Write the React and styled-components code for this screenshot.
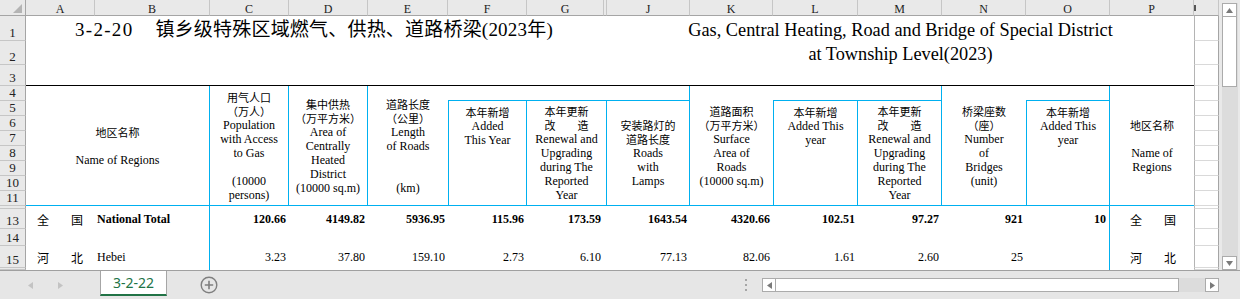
import React from "react";
import styled, { createGlobalStyle } from "styled-components";

const CYAN = "#00b0f0";
const SERIF = `"Liberation Serif", "Noto Sans CJK SC", serif`;
const CJK = `"Noto Sans CJK SC", sans-serif`;

const GlobalStyle = createGlobalStyle`
  html, body { margin: 0; padding: 0; overflow: hidden; background: #fff; }
  * { box-sizing: border-box; }
`;

const Window = styled.div`
  width: 1240px;
  height: 299px;
  display: flex;
  flex-direction: column;
  background: #e6e6e6;
  font-family: ${SERIF};
  color: #000;
`;

const Main = styled.div`
  display: flex;
  height: 270px;
`;

const Sheet = styled.div`
  display: grid;
  grid-template-columns: 26px 69px 115px 79px 79px 80px 79px 77px 3px 83px 83px 85px 84px 84px 84px 84px 25px;
  grid-template-rows: 16px 25px 24px 21px repeat(8, 15px) 3px 20px 17px 22px 2px;
  width: 1219px;
  height: 270px;
  background: #fff;
  overflow: hidden;
`;

const line = (c) => (c ? `1px solid ${c}` : "none");

const Corner = styled.div`
  grid-column: 1;
  grid-row: 1;
  background: #e9e9e9;
  border-right: 1px solid #a5a5a5;
  border-bottom: 1px solid #a5a5a5;
  display: flex;
  align-items: flex-end;
  justify-content: flex-end;
  padding: 0 3px 2px 0;
`;

const ColHead = styled.div`
  grid-column: ${(p) => p.$c};
  grid-row: 1;
  background: #e9e9e9;
  border-right: 1px solid #c6c6c6;
  border-bottom: 1px solid #a5a5a5;
  display: flex;
  align-items: center;
  justify-content: ${(p) => (p.$tick ? "flex-start" : "center")};
  padding-top: 2px;
  font-size: 12px;
  line-height: 14px;
  color: #222;
  overflow: hidden;
`;

const Tick = styled.span`
  width: 2px;
  height: 6px;
  margin-top: -2px;
  background: #555;
`;

const RowHead = styled.div`
  grid-column: 1;
  grid-row: ${(p) => p.$r};
  background: #e9e9e9;
  border-right: 1px solid #a5a5a5;
  border-bottom: 1px solid #c6c6c6;
  display: flex;
  align-items: flex-end;
  justify-content: center;
  font-size: 13px;
  line-height: 14px;
  color: #222;
  overflow: hidden;
`;

const TitleCn = styled.div`
  grid-column: 2 / span 8;
  grid-row: 2 / span 3;
  border-bottom: 1px solid #000;
  padding: 2px 0 0 49px;
  font-size: 19px;
  line-height: 24px;
  white-space: nowrap;
`;

const TitleNo = styled.span`
  letter-spacing: 1.3px;
`;

const TitleText = styled.span`
  margin-left: 22px;
  letter-spacing: 0.2px;
`;

const TitleEn = styled.div`
  grid-column: 10 / span 7;
  grid-row: 2 / span 3;
  border-bottom: 1px solid #000;
  padding-top: 2px;
  font-size: 18.3px;
  line-height: 24px;
  text-align: center;
  white-space: nowrap;
`;

const HeadCell = styled.div`
  grid-column: ${(p) => p.$c} / span ${(p) => p.$cs || 1};
  grid-row: ${(p) => p.$r} / span ${(p) => p.$rs};
  border-left: ${(p) => line(p.$left && CYAN)};
  border-right: ${(p) => line(p.$right && CYAN)};
  border-bottom: 1px solid ${CYAN};
  display: flex;
  flex-direction: column;
  align-items: center;
  justify-content: ${(p) => (p.$top ? "flex-start" : "center")};
  padding-top: ${(p) => (p.$top ? "4px" : "0")};
  text-align: center;
  overflow: hidden;
`;

const Line = styled.div`
  height: 14px;
  line-height: 14px;
  font-size: 12px;
  white-space: nowrap;
`;

const Cn = styled.span`
  font-family: ${CJK};
  font-size: 11px;
`;

const NameCn = styled.div`
  grid-column: ${(p) => p.$c};
  grid-row: ${(p) => p.$r};
  display: flex;
  align-items: center;
  justify-content: space-between;
  padding: ${(p) => p.$pad};
  font-family: ${CJK};
  font-size: 12px;
`;

const NameEn = styled.div`
  grid-column: 3;
  grid-row: ${(p) => p.$r};
  border-right: 1px solid ${CYAN};
  display: flex;
  align-items: center;
  padding-left: 2px;
  font-size: 12px;
  font-weight: ${(p) => (p.$bold ? 700 : 400)};
  white-space: nowrap;
`;

const Value = styled.div`
  grid-column: ${(p) => p.$c};
  grid-row: ${(p) => p.$r};
  border-right: ${(p) => line(p.$edge && CYAN)};
  display: flex;
  align-items: center;
  justify-content: flex-end;
  padding: 1px 3px 0 0;
  font-size: 12px;
  font-weight: ${(p) => (p.$bold ? 700 : 400)};
`;

const Edge = styled.div`
  grid-column: ${(p) => p.$c};
  grid-row: ${(p) => p.$r};
  border-right: 1px solid ${CYAN};
`;

const GapCell = styled.div`
  grid-column: 17;
  grid-row: ${(p) => p.$r};
  border-left: 1px solid #b4b4b4;
  border-right: 1px solid #a5a5a5;
  border-bottom: 1px solid #d9d9d9;
`;

const VScroll = styled.div`
  width: 21px;
  height: 270px;
  background: #e9e9e9;
  padding: 3px 2px 0 3px;
`;

const VTrack = styled.div`
  height: 100%;
  background: #dcdcdc;
  display: flex;
  flex-direction: column;
`;

const ScrollBtn = styled.div`
  width: ${(p) => p.$w}px;
  height: ${(p) => p.$h}px;
  flex: none;
  background: #fff;
  border: 1px solid #ababab;
  display: flex;
  align-items: center;
  justify-content: center;
`;

const VThumb = styled.div`
  width: 15px;
  height: 70px;
  background: #fff;
  border: 1px solid #ababab;
  border-top: none;
`;

const Bar = styled.div`
  height: 29px;
  border-top: 1px solid #a0a0a0;
  background: #e6e6e6;
  display: flex;
  align-items: flex-start;
`;

const Nav = styled.div`
  width: 100px;
  height: 28px;
  display: flex;
  align-items: center;
  padding-left: 27px;
  gap: 23px;
`;

const Tab = styled.div`
  width: 67px;
  height: 25px;
  background: #fff;
  border: 1px solid #a6a6a6;
  border-top: none;
  border-bottom: 2px solid #217346;
  display: flex;
  align-items: center;
  justify-content: center;
  font-family: "Noto Sans", sans-serif;
  font-size: 14px;
  color: #217346;
`;

const AddSheet = styled.svg`
  margin: 5px 0 0 33px;
`;

const Spacer = styled.div`
  flex: 1;
`;

const Dots = styled.svg`
  margin-top: 8px;
`;

const HScroll = styled.div`
  width: 457px;
  height: 14px;
  margin: 7px 21px 0 14px;
  display: flex;
  background: #dcdcdc;
`;

const HThumb = styled.div`
  width: 403px;
  height: 14px;
  background: #fff;
  border: 1px solid #ababab;
  border-left: none;
`;

const HGap = styled.div`
  flex: 1;
`;

const Arrow = ({ dir, color = "#7a7a7a", size = 7 }) => {
  const pts = {
    up: "0,6 3.5,1 7,6",
    down: "0,1 3.5,6 7,1",
    left: "6,0 1,3.5 6,7",
    right: "1,0 6,3.5 1,7",
  }[dir];
  return (
    <svg width={size} height={size} viewBox="0 0 7 7">
      <polygon points={pts} fill={color} />
    </svg>
  );
};

const cn = (t) => ({ cn: t });

const HEADS = [
  { c: 2, cs: 2, r: 5, rs: 8, right: true, lines: [cn("地区名称"), "", "Name of Regions"] },
  { c: 4, r: 5, rs: 8, right: true, lines: [cn("用气人口"), cn("（万人）"), "Population", "with Access", "to Gas", "", "(10000", "persons)"] },
  { c: 5, r: 5, rs: 8, right: true, lines: [cn("集中供热"), cn("（万平方米）"), "Area of", "Centrally", "Heated", "District", "(10000 sq.m)"] },
  { c: 6, r: 5, rs: 8, lines: [cn("道路长度"), cn("（公里）"), "Length", "of Roads", "", "", "(km)"] },
  { c: 7, cs: 4, r: 5, rs: 1, right: true },
  { c: 7, r: 6, rs: 7, left: true, right: true, top: true, lines: [cn("本年新增"), "Added", "This Year"] },
  { c: 8, cs: 2, r: 6, rs: 7, right: true, lines: [cn("本年更新"), cn("改　　造"), "Renewal and", "Upgrading", "during The", "Reported", "Year"] },
  { c: 10, r: 6, rs: 7, right: true, lines: [cn("安装路灯的"), cn("道路长度"), "Roads", "with", "Lamps"] },
  { c: 11, r: 5, rs: 8, lines: [cn("道路面积"), cn("（万平方米）"), "Surface", "Area of", "Roads", "(10000 sq.m)"] },
  { c: 12, cs: 2, r: 5, rs: 1, right: true },
  { c: 12, r: 6, rs: 7, left: true, right: true, top: true, lines: [cn("本年新增"), "Added This", "year"] },
  { c: 13, r: 6, rs: 7, right: true, lines: [cn("本年更新"), cn("改　　造"), "Renewal and", "Upgrading", "during The", "Reported", "Year"] },
  { c: 14, r: 5, rs: 8, lines: [cn("桥梁座数"), cn("（座）"), "Number", "of", "Bridges", "(unit)"] },
  { c: 15, r: 5, rs: 1, right: true },
  { c: 15, r: 6, rs: 7, left: true, right: true, top: true, lines: [cn("本年新增"), "Added This", "year"] },
  { c: 16, r: 5, rs: 8, lines: [cn("地区名称"), "", "Name of", "Regions"] },
];

const COLS = [
  [2, "A"], [3, "B"], [4, "C"], [5, "D"], [6, "E"], [7, "F"], [8, "G"], [9, ""],
  [10, "J"], [11, "K"], [12, "L"], [13, "M"], [14, "N"], [15, "O"], [16, "P"],
];

const ROW_LABELS = ["1", "2", "3", "4", "5", "6", "7", "8", "9", "10", "11", "", "13", "14", "15", ""];

const VAL_COLS = [4, 5, 6, 7, 8, 10, 11, 12, 13, 14, 15];

const DATA = [
  {
    r: 14,
    name: ["全", "国"],
    en: "National Total",
    bold: true,
    vals: ["120.66", "4149.82", "5936.95", "115.96", "173.59", "1643.54", "4320.66", "102.51", "97.27", "921", "10"],
  },
  {
    r: 16,
    name: ["河", "北"],
    en: "Hebei",
    vals: ["3.23", "37.80", "159.10", "2.73", "6.10", "77.13", "82.06", "1.61", "2.60", "25", ""],
  },
];

const BLANK_ROWS = [13, 15, 17];

export default function App() {
  return (
    <>
      <GlobalStyle />
      <Window>
        <Main>
          <Sheet>
            <Corner>
              <svg width="9" height="9" viewBox="0 0 9 9">
                <polygon points="9,0 9,9 0,9" fill="#b4b4b4" />
              </svg>
            </Corner>
            {COLS.map(([c, t]) => (
              <ColHead key={c} $c={c}>{t}</ColHead>
            ))}
            <ColHead $c={17} $tick>
              <Tick />
            </ColHead>

            {ROW_LABELS.map((t, i) => (
              <RowHead key={i} $r={i + 2}>{t}</RowHead>
            ))}

            <TitleCn>
              <TitleNo>3-2-20</TitleNo>
              <TitleText>镇乡级特殊区域燃气、供热、道路桥梁(2023年)</TitleText>
            </TitleCn>
            <TitleEn>
              Gas, Central Heating, Road and Bridge of Special District
              <br />
              at Township Level(2023)
            </TitleEn>

            {HEADS.map((h, i) => (
              <HeadCell
                key={i}
                $c={h.c}
                $cs={h.cs}
                $r={h.r}
                $rs={h.rs}
                $left={h.left}
                $right={h.right}
                $top={h.top}
              >
                {(h.lines || []).map((ln, j) => (
                  <Line key={j}>{typeof ln === "object" ? <Cn>{ln.cn}</Cn> : ln || "\u00a0"}</Line>
                ))}
              </HeadCell>
            ))}

            {DATA.map((d) => (
              <React.Fragment key={d.r}>
                <NameCn $c={2} $r={d.r} $pad="0 12px 0 11px">
                  <span>{d.name[0]}</span>
                  <span>{d.name[1]}</span>
                </NameCn>
                <NameEn $r={d.r} $bold={d.bold}>{d.en}</NameEn>
                {d.vals.map((v, j) => (
                  <Value key={j} $c={VAL_COLS[j]} $r={d.r} $bold={d.bold} $edge={VAL_COLS[j] === 15}>
                    {v}
                  </Value>
                ))}
                <NameCn $c={16} $r={d.r} $pad="0 18px 0 20px">
                  <span>{d.name[0]}</span>
                  <span>{d.name[1]}</span>
                </NameCn>
              </React.Fragment>
            ))}
            {BLANK_ROWS.map((r) => (
              <React.Fragment key={r}>
                <Edge $c={3} $r={r} />
                <Edge $c={15} $r={r} />
              </React.Fragment>
            ))}

            {Array.from({ length: 16 }, (_, i) => (
              <GapCell key={i} $r={i + 2} />
            ))}
          </Sheet>

          <VScroll>
            <VTrack>
              <ScrollBtn $w={15} $h={14}>
                <Arrow dir="up" />
              </ScrollBtn>
              <VThumb />
              <HGap />
              <ScrollBtn $w={15} $h={14}>
                <Arrow dir="down" />
              </ScrollBtn>
            </VTrack>
          </VScroll>
        </Main>

        <Bar>
          <Nav>
            <Arrow dir="left" color="#c3c3c3" size={7} />
            <Arrow dir="right" color="#c3c3c3" size={7} />
          </Nav>
          <Tab>3-2-22</Tab>
          <AddSheet width="18" height="18" viewBox="0 0 18 18">
            <circle cx="9" cy="9" r="7.8" fill="none" stroke="#7f7f7f" strokeWidth="1.4" />
            <path d="M9 4.8v8.4M4.8 9h8.4" stroke="#7f7f7f" strokeWidth="1.6" />
          </AddSheet>
          <Spacer />
          <Dots width="4" height="12" viewBox="0 0 4 12">
            <rect x="1" y="0" width="2" height="2" fill="#a6a6a6" />
            <rect x="1" y="5" width="2" height="2" fill="#a6a6a6" />
            <rect x="1" y="10" width="2" height="2" fill="#a6a6a6" />
          </Dots>
          <HScroll>
            <ScrollBtn $w={14} $h={14}>
              <Arrow dir="left" />
            </ScrollBtn>
            <HThumb />
            <HGap />
            <ScrollBtn $w={14} $h={14}>
              <Arrow dir="right" />
            </ScrollBtn>
          </HScroll>
        </Bar>
      </Window>
    </>
  );
}
